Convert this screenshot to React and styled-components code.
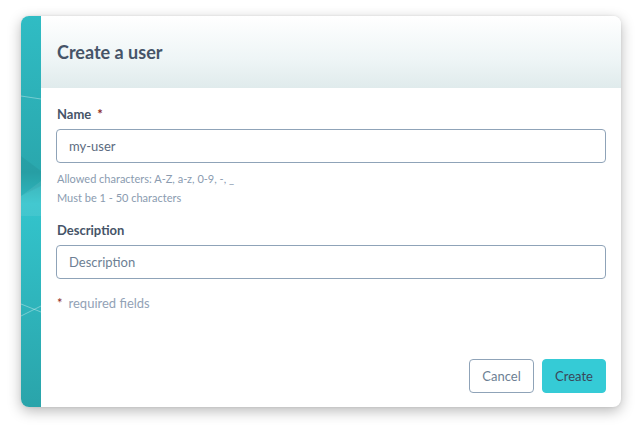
import React from 'react';
import styled, { createGlobalStyle } from 'styled-components';

const GlobalStyle = createGlobalStyle`
  html, body {
    margin: 0;
    padding: 0;
    background: #ffffff;
    font-family: Lato, "Open Sans", sans-serif;
  }
`;

const Page = styled.div`
  width: 642px;
  height: 434px;
  padding: 16px 21px 0 21px;
  box-sizing: border-box;
`;

const Dialog = styled.div`
  display: flex;
  width: 600px;
  height: 391px;
  border-radius: 8px;
  overflow: hidden;
  background: #fff;
  box-shadow: 0 4px 14px rgba(0, 0, 0, 0.28), 0 0 3px rgba(0, 0, 0, 0.08);
`;

const Strip = styled.div`
  width: 20px;
  flex: none;
  background: linear-gradient(180deg, #30bcc4 0%, #2aa7ad 40%, #33c4cc 48%, #2aa4aa 100%);
  svg {
    display: block;
  }
`;

const Main = styled.div`
  flex: 1;
  display: flex;
  flex-direction: column;
`;

const Header = styled.div`
  height: 72px;
  display: flex;
  align-items: center;
  padding: 0 16px;
  background: linear-gradient(180deg, #ffffff 0%, #eef5f6 60%, #e0ebec 100%);
`;

const Title = styled.h2`
  margin: 0;
  font-size: 18px;
  font-weight: 700;
  color: #465468;
`;

const Body = styled.div`
  flex: 1;
  display: flex;
  flex-direction: column;
  padding: 17px 15px 14px 15px;
`;

const Label = styled.label`
  display: block;
  font-size: 13px;
  line-height: 18px;
  font-weight: 700;
  color: #465468;
  margin: ${p => p.top || 0}px 0 6px 1px;
`;

const Star = styled.span`
  color: #8c2a1c;
  margin-left: 6px;
`;

const Input = styled.input`
  box-sizing: border-box;
  width: 100%;
  height: 34px;
  border: 1px solid #8fa3b8;
  border-radius: 4px;
  padding: 0 12px;
  font-family: inherit;
  font-size: 13px;
  color: #5b6b80;
  background: #fff;
  outline: none;
  &::placeholder {
    color: #6d7f94;
  }
`;

const Help = styled.div`
  margin-top: 6px;
  font-size: 11px;
  line-height: 19px;
  color: #8a9bb0;
  padding-left: 1px;
`;

const Required = styled.div`
  margin-top: 15px;
  font-size: 13px;
  line-height: 18px;
  color: #92a2b6;
  padding-left: 1px;
  span {
    color: #8c2a1c;
    margin-right: 6px;
  }
`;

const Footer = styled.div`
  margin-top: auto;
  display: flex;
  justify-content: flex-end;
  gap: 8px;
`;

const Button = styled.button`
  box-sizing: border-box;
  height: 34px;
  min-width: ${p => (p.primary ? 64 : 65)}px;
  padding: 0 12px;
  border-radius: 4px;
  font-family: inherit;
  font-size: 13px;
  border: 1px solid ${p => (p.primary ? '#35cbd6' : '#8fa3b8')};
  background: ${p => (p.primary ? '#35cbd6' : '#fff')};
  color: ${p => (p.primary ? '#3a475a' : '#6d7f94')};
  cursor: pointer;
`;

function StripArt() {
  return (
    <svg width="20" height="391" viewBox="0 0 20 391">
      <line x1="0" y1="80" x2="20" y2="83" stroke="rgba(255,255,255,0.35)" strokeWidth="1" />
      <polygon points="0,140 20,155 20,170 0,180" fill="rgba(0,0,0,0.05)" />
      <polygon points="0,180 20,165 20,200 0,200" fill="rgba(255,255,255,0.08)" />
      <line x1="0" y1="288" x2="20" y2="296" stroke="rgba(255,255,255,0.35)" strokeWidth="1" />
      <line x1="0" y1="300" x2="20" y2="290" stroke="rgba(255,255,255,0.35)" strokeWidth="1" />
    </svg>
  );
}

export default function App() {
  return (
    <>
      <GlobalStyle />
      <Page>
        <Dialog>
          <Strip>
            <StripArt />
          </Strip>
          <Main>
            <Header>
              <Title>Create a user</Title>
            </Header>
            <Body>
              <Label>
                Name<Star>*</Star>
              </Label>
              <Input defaultValue="my-user" />
              <Help>
                Allowed characters: A-Z, a-z, 0-9, -, _
                <br />
                Must be 1 - 50 characters
              </Help>
              <Label top={14}>Description</Label>
              <Input placeholder="Description" />
              <Required>
                <span>*</span>required fields
              </Required>
              <Footer>
                <Button>Cancel</Button>
                <Button primary>Create</Button>
              </Footer>
            </Body>
          </Main>
        </Dialog>
      </Page>
    </>
  );
}
